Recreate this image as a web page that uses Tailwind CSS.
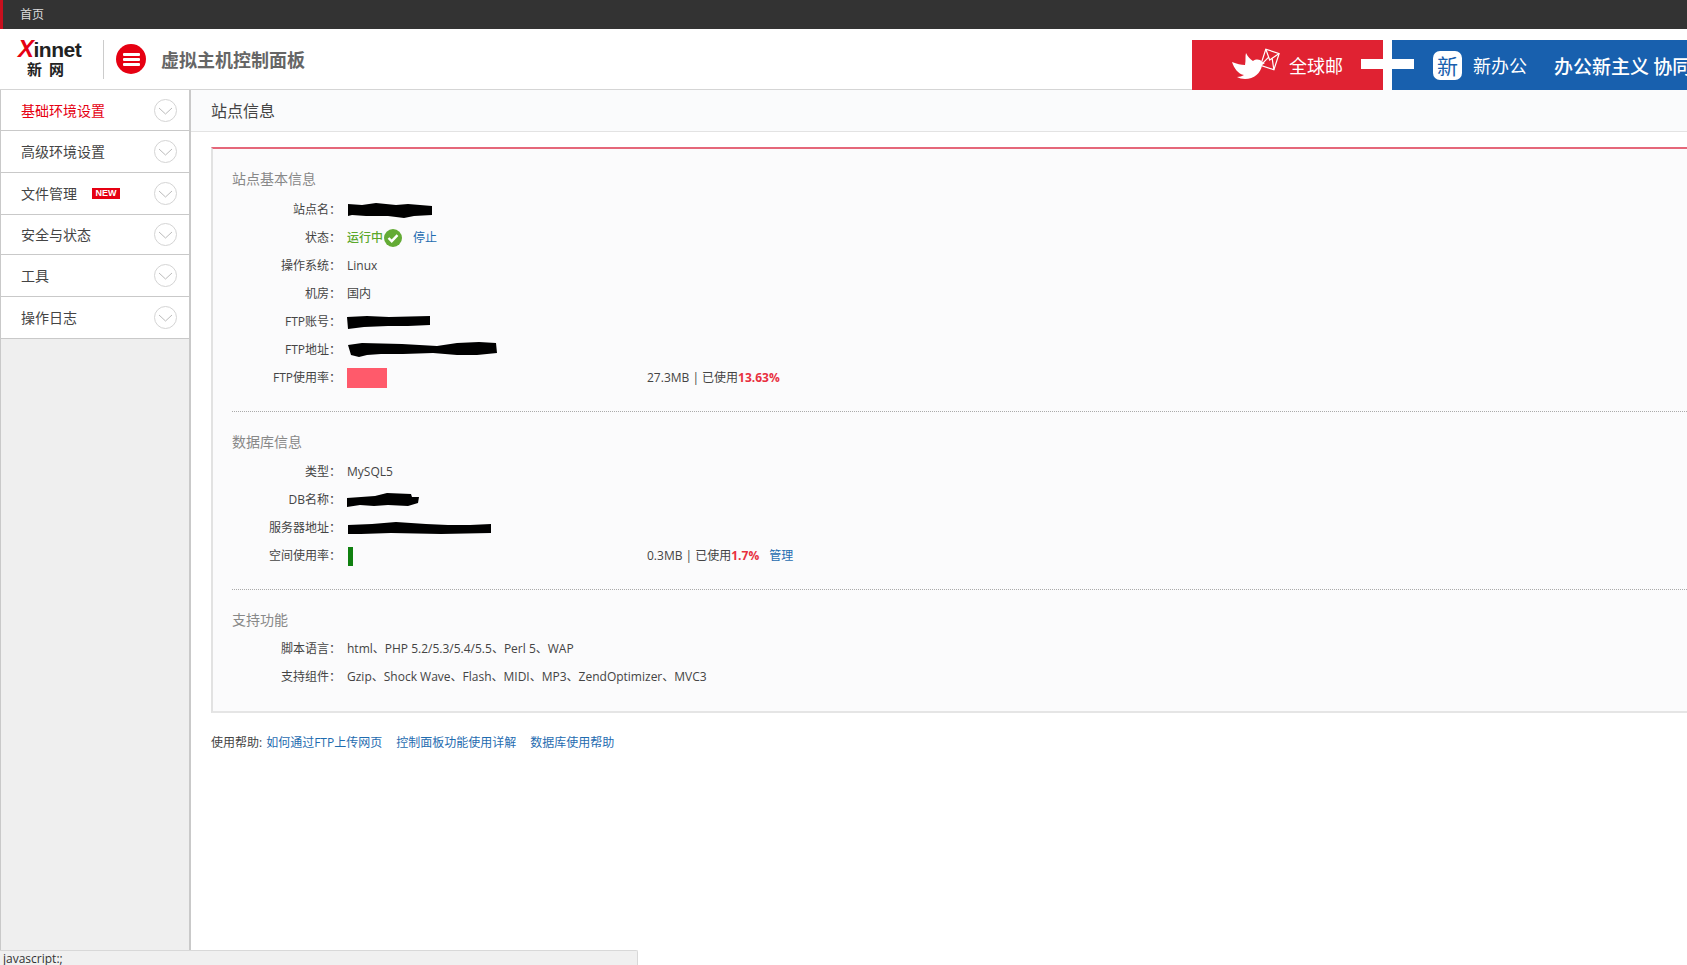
<!DOCTYPE html>
<html lang="zh-CN">
  <head>
    <meta charset="UTF-8" />
    <title>虚拟主机控制面板</title>
    <script src="https://cdn.jsdelivr.net/npm/@tailwindcss/browser@4"></script>
  </head>
  <body class="bg-white">
    <div class="relative w-[1687px] h-[965px] overflow-hidden flex flex-col text-[12px] text-[#444] font-['Open_Sans','Noto_Sans_CJK_SC',sans-serif]">
      <!-- top bar -->
      <div class="h-[29px] shrink-0 bg-[#333] border-l-[3px] border-[#c8101e] pl-[17px] flex items-center text-[#ddd]">首页</div>

      <!-- header -->
      <div class="relative h-[61px] shrink-0 flex items-center border-b border-[#d5d5d5]">
        <div class="w-[103px] h-[60px] pl-[18px] pt-[10px] shrink-0">
          <div class="flex items-baseline h-[20px] leading-[20px] font-['Liberation_Sans',sans-serif] font-bold text-[21px] tracking-[-0.5px] text-[#222]"><span class="text-[#e60012] italic text-[24px]">X</span>innet</div>
          <div class="mt-[1px] pl-[9px] h-[18px] leading-[18px] text-[15px] font-bold text-[#222] font-['Noto_Sans_CJK_SC',sans-serif] tracking-[7px]">新网</div>
        </div>
        <div class="w-px h-[39px] bg-[#ccc] shrink-0"></div>
        <div class="ml-[12px] w-[30px] h-[30px] rounded-full bg-[#e60012] flex flex-col items-center justify-center gap-[2px] shrink-0">
          <span class="w-[17px] h-[3px] bg-white rounded-[1px]"></span>
          <span class="w-[17px] h-[3px] bg-white rounded-[1px]"></span>
          <span class="w-[17px] h-[3px] bg-white rounded-[1px]"></span>
        </div>
        <div class="ml-[15px] text-[18px] font-bold text-[#666] font-['Noto_Sans_CJK_SC',sans-serif]">虚拟主机控制面板</div>

        <!-- banner -->
        <div class="absolute left-[1192px] top-[11px] h-[50px] w-[495px] flex font-['Noto_Sans_CJK_SC',sans-serif] text-white">
          <div class="relative w-[191px] bg-[#e02232] flex items-center">
            <svg class="absolute left-[38px] top-[6px]" width="54" height="36" viewBox="0 0 54 36">
              <path d="M2 16c5 2 9 3 13 3 1-5 0-9 1-12 2 4 4 6 7 8 3-2 7-2 9 1l3 1-3 2c-1 8-8 14-17 14-3 0-6-1-8-2 3 0 5-1 7-2C8 28 4 22 2 16z" fill="#fff" />
              <g transform="rotate(18 40 13)" fill="none" stroke="#fff" stroke-width="1.2">
                <rect x="33" y="5" width="14" height="17" />
                <path d="M33 5l7 9 7-9M33 22l5-10M47 22l-5-10" />
              </g>
            </svg>
            <span class="ml-[97px] text-[18px] leading-none">全球邮</span>
            <span class="absolute right-0 top-[19px] w-[22px] h-[10px] bg-white"></span>
          </div>
          <div class="w-[9px] bg-white"></div>
          <div class="relative flex-1 bg-[#1860ae] flex items-center overflow-hidden whitespace-nowrap">
            <span class="absolute left-0 top-[19px] w-[22px] h-[10px] bg-white"></span>
            <span class="ml-[41px] w-[29px] h-[29px] rounded-[7px] bg-white text-[#1860ae] text-[21px] leading-[29px] text-center shrink-0">新</span>
            <span class="ml-[11px] text-[18px] leading-none">新办公</span>
            <span class="ml-[27px] text-[19px] leading-none font-medium">办公新主义 协同</span>
          </div>
        </div>
      </div>

      <div class="flex flex-1 min-h-0">
        <!-- sidebar -->
        <div class="w-[191px] shrink-0 bg-[#efefef] border-l border-r-2 border-[#c9c9c9] text-[14px]">
          <div class="h-[41px] bg-white border-b border-[#c9c9c9] pl-[20px] pr-[12px] flex items-center justify-between text-[#e60012]">
            <span>基础环境设置</span>
            <svg width="23" height="23" viewBox="0 0 23 23" fill="none" stroke="#d4d4d4"><circle cx="11.5" cy="11.5" r="11" /><path d="M5 9l6.5 6L18 9" stroke="#bbb" /></svg>
          </div>
          <div class="h-[42px] bg-white border-b border-[#c9c9c9] pl-[20px] pr-[12px] flex items-center justify-between">
            <span>高级环境设置</span>
            <svg width="23" height="23" viewBox="0 0 23 23" fill="none" stroke="#d4d4d4"><circle cx="11.5" cy="11.5" r="11" /><path d="M5 9l6.5 6L18 9" stroke="#bbb" /></svg>
          </div>
          <div class="h-[42px] bg-white border-b border-[#c9c9c9] pl-[20px] pr-[12px] flex items-center justify-between">
            <span class="flex items-center">文件管理<b class="ml-[15px] w-[28px] h-[11px] bg-[#e60012] text-white text-[9px] leading-[11px] text-center font-['Liberation_Sans',sans-serif]">NEW</b></span>
            <svg width="23" height="23" viewBox="0 0 23 23" fill="none" stroke="#d4d4d4"><circle cx="11.5" cy="11.5" r="11" /><path d="M5 9l6.5 6L18 9" stroke="#bbb" /></svg>
          </div>
          <div class="h-[40px] bg-white border-b border-[#c9c9c9] pl-[20px] pr-[12px] flex items-center justify-between">
            <span>安全与状态</span>
            <svg width="23" height="23" viewBox="0 0 23 23" fill="none" stroke="#d4d4d4"><circle cx="11.5" cy="11.5" r="11" /><path d="M5 9l6.5 6L18 9" stroke="#bbb" /></svg>
          </div>
          <div class="h-[42px] bg-white border-b border-[#c9c9c9] pl-[20px] pr-[12px] flex items-center justify-between">
            <span>工具</span>
            <svg width="23" height="23" viewBox="0 0 23 23" fill="none" stroke="#d4d4d4"><circle cx="11.5" cy="11.5" r="11" /><path d="M5 9l6.5 6L18 9" stroke="#bbb" /></svg>
          </div>
          <div class="h-[42px] bg-white border-b border-[#c9c9c9] pl-[20px] pr-[12px] flex items-center justify-between">
            <span>操作日志</span>
            <svg width="23" height="23" viewBox="0 0 23 23" fill="none" stroke="#d4d4d4"><circle cx="11.5" cy="11.5" r="11" /><path d="M5 9l6.5 6L18 9" stroke="#bbb" /></svg>
          </div>
        </div>

        <!-- content -->
        <div class="flex-1 min-w-0">
          <div class="h-[42px] bg-[#fafbfc] border-b border-[#e3e3e3] pl-[20px] flex items-center text-[16px]">站点信息</div>

          <div class="ml-[20px] mt-[15px] bg-[#fbfbfc] border-t-2 border-t-[#e5677a] border-l-2 border-l-[#e2e2e2] border-b-2 border-b-[#e5e5e5] pl-[19px] pb-[20px]">
            <!-- 站点基本信息 -->
            <div class="pt-[20px] pb-[19px] border-b border-dotted border-[#aaa]">
              <div class="h-[20px] leading-[20px] text-[14px] text-[#888] mb-[7px]">站点基本信息</div>
              <div class="h-[28px] flex items-center">
                <span class="w-[109px] text-right mr-[6px]">站点名：</span>
                <svg width="88" height="16" viewBox="0 0 88 16"><path d="M1 2l14 1 14-2 20 2 12-1 24 2v9l-18 1-10 2-16-2-22 0-14-1-4 1z" fill="#000" /></svg>
              </div>
              <div class="h-[28px] flex items-center">
                <span class="w-[109px] text-right mr-[6px]">状态：</span>
                <span class="text-[#5ba82b] font-medium">运行中</span>
                <svg class="ml-[1px]" width="18" height="18" viewBox="0 0 18 18"><circle cx="9" cy="9" r="9" fill="#63ab35" /><path d="M4.5 9l3.2 3.2 5.8-6" fill="none" stroke="#fff" stroke-width="2.4" /></svg>
                <a class="ml-[11px] text-[#1f6cb0]">停止</a>
              </div>
              <div class="h-[28px] flex items-center">
                <span class="w-[109px] text-right mr-[6px]">操作系统：</span><span>Linux</span>
              </div>
              <div class="h-[28px] flex items-center">
                <span class="w-[109px] text-right mr-[6px]">机房：</span><span>国内</span>
              </div>
              <div class="h-[28px] flex items-center">
                <span class="w-[109px] text-right mr-[6px]">FTP账号：</span>
                <svg width="83" height="14" viewBox="0 0 83 14"><path d="M0 2l20-1 22 1 41-1v9l-22 1-20 0-24 1-16 2z" fill="#000" /></svg>
              </div>
              <div class="h-[28px] flex items-center">
                <span class="w-[109px] text-right mr-[6px]">FTP地址：</span>
                <svg width="150" height="17" viewBox="0 0 150 17"><path d="M1 3l14-2 40 1 35 2 20-3 22-1 17 1 1 10-20 2-20 0-24-2-30 1-22 0-14 1-8 2-8-2z" fill="#000" /></svg>
              </div>
              <div class="h-[28px] flex items-center">
                <span class="w-[109px] text-right mr-[6px]">FTP使用率：</span>
                <div class="w-[278px] shrink-0 h-[20px]"><div class="h-full bg-[#ff5a6b]" style="width: 40px"></div></div>
                <span class="ml-[22px]">27.3MB | 已使用<b class="text-[#e8303f]">13.63%</b></span>
              </div>
            </div>

            <!-- 数据库信息 -->
            <div class="pt-[20px] pb-[19px] border-b border-dotted border-[#aaa]">
              <div class="h-[20px] leading-[20px] text-[14px] text-[#888] mb-[6px]">数据库信息</div>
              <div class="h-[28px] flex items-center">
                <span class="w-[109px] text-right mr-[6px]">类型：</span><span>MySQL5</span>
              </div>
              <div class="h-[28px] flex items-center">
                <span class="w-[109px] text-right mr-[6px]">DB名称：</span>
                <svg width="72" height="15" viewBox="0 0 72 15"><path d="M0 5l14-1 14-1 12-3 24 1 1 3 7 0-1 6-10 3-20-1-14 1-14-1-13 2z" fill="#000" /></svg>
              </div>
              <div class="h-[28px] flex items-center">
                <span class="w-[109px] text-right mr-[6px]">服务器地址：</span>
                <svg width="144" height="12" viewBox="0 0 144 12"><path d="M1 3l24-1 24-2 30 2 22 1 22 0 21-1v9l-50 1-50-1-30 1-13 0z" fill="#000" /></svg>
              </div>
              <div class="h-[28px] flex items-center">
                <span class="w-[109px] text-right mr-[6px]">空间使用率：</span>
                <div class="w-[278px] shrink-0 h-[19px] pl-px"><div class="h-full bg-[#108010]" style="width: 5px"></div></div>
                <span class="ml-[22px]">0.3MB | 已使用<b class="text-[#e8303f]">1.7%</b></span>
                <a class="ml-[10px] text-[#1f6cb0]">管理</a>
              </div>
            </div>

            <!-- 支持功能 -->
            <div class="pt-[20px]">
              <div class="h-[20px] leading-[20px] text-[14px] text-[#888] mb-[5px]">支持功能</div>
              <div class="h-[28px] flex items-center">
                <span class="w-[109px] text-right mr-[6px]">脚本语言：</span><span>html、PHP 5.2/5.3/5.4/5.5、Perl 5、WAP</span>
              </div>
              <div class="h-[28px] flex items-center">
                <span class="w-[109px] text-right mr-[6px]">支持组件：</span><span>Gzip、Shock Wave、Flash、MIDI、MP3、ZendOptimizer、MVC3</span>
              </div>
            </div>
          </div>

          <div class="ml-[20px] mt-[20px] h-[20px] flex items-center">
            <span>使用帮助:</span>
            <a class="ml-[4px] text-[#1f6cb0]">如何通过FTP上传网页</a>
            <a class="ml-[14px] text-[#1f6cb0]">控制面板功能使用详解</a>
            <a class="ml-[14px] text-[#1f6cb0]">数据库使用帮助</a>
          </div>
        </div>
      </div>

      <!-- browser status bubble -->
      <div class="absolute left-0 bottom-0 w-[638px] h-[15px] bg-[#f0f0f0] border-t border-r border-[#d8d8d8] rounded-tr-[2px] pl-[3px] leading-[16px] text-[12px] text-[#333]">javascript:;</div>
    </div>
  </body>
</html>
